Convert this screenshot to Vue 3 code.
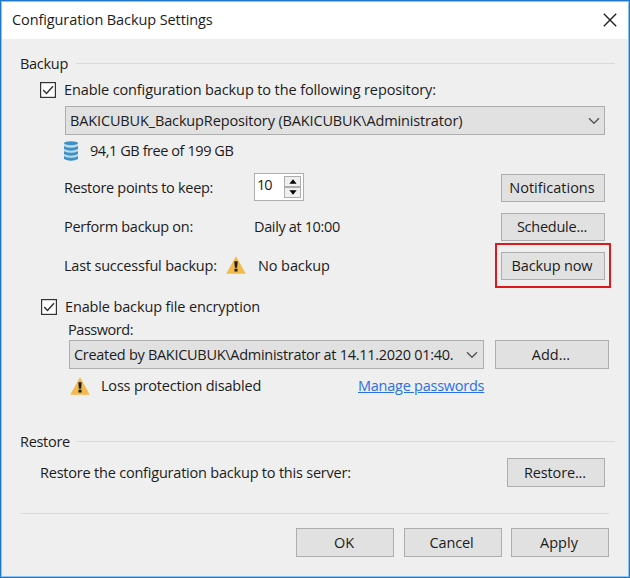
<script setup>
import { ref } from 'vue'

const backupEnabled = ref(true)
const encryptionEnabled = ref(true)
const keep = ref(10)
</script>

<template>
  <div class="window">
    <header class="titlebar">
      <span class="t s-title">Configuration Backup Settings</span>
      <svg class="close" width="14" height="14" viewBox="0 0 14 14"><path d="M0.8 0.8L13.2 13.2M13.2 0.8L0.8 13.2" /></svg>
    </header>

    <section class="backup">
      <div class="heading"><span class="t s-backup">Backup</span><i class="rule"></i></div>

      <div class="check-row first" @click="backupEnabled = !backupEnabled">
        <svg class="box" width="16" height="16" viewBox="0 0 16 16"><rect x=".6" y=".6" width="14.8" height="14.8" /><path v-if="backupEnabled" d="M3.2 8L6.5 11.4L13 4.2" /></svg>
        <span class="t s-enable">Enable configuration backup to the following repository:</span>
      </div>

      <div class="combo repo">
        <span class="t s-repo">BAKICUBUK_BackupRepository (BAKICUBUK\Administrator)</span>
        <svg class="chev" width="12" height="8" viewBox="0 0 12 8"><path d="M1 1.2L6 6.2L11 1.2" /></svg>
      </div>

      <div class="space-row">
        <svg class="db" width="14" height="20" viewBox="0 0 14 20">
          <path class="body" d="M0 2.2H14V18Q7 21.4 0 18Z" />
          <ellipse cx="7" cy="2.2" rx="7" ry="2" />
          <path class="band" d="M0 5.2Q7 8.2 14 5.2V8.1Q7 11.2 0 8.1ZM0 10.2Q7 13.2 14 10.2V13.1Q7 16.2 0 13.1ZM0 15.2Q7 18.2 14 15.2V18Q7 21.4 0 18Z" />
        </svg>
        <span class="t s-free">94,1 GB free of 199 GB</span>
      </div>

      <div class="field">
        <span class="t label s-keep">Restore points to keep:</span>
        <div class="spinner">
          <span class="t num">{{ keep }}</span>
          <div class="arrows">
            <button @click="keep++"><svg width="8" height="5" viewBox="0 0 8 5"><path d="M4 .3L7.6 4.7H.4Z" /></svg></button>
            <button @click="keep--"><svg width="8" height="5" viewBox="0 0 8 5"><path d="M4 4.7L7.6 .3H.4Z" /></svg></button>
          </div>
        </div>
        <button class="btn side-btn"><span class="t">Notifications</span></button>
      </div>

      <div class="field">
        <span class="t label s-perform">Perform backup on:</span>
        <span class="t s-daily">Daily at 10:00</span>
        <button class="btn side-btn"><span class="t s-sched">Schedule...</span></button>
      </div>

      <div class="field">
        <span class="t label short s-last">Last successful backup:</span>
        <svg class="warn" width="20" height="18" viewBox="0 0 20 18"><path d="M10 0.2L19.8 17.8H.2Z" /><path class="mark" d="M8.3 5.2H11.7L11.1 11.8H8.9ZM8.5 12.8H11.5V15.6H8.5Z" /></svg>
        <span class="t s-none">No backup</span>
        <button class="btn side-btn highlighted"><span class="t s-now">Backup now</span></button>
      </div>

      <div class="check-row second" @click="encryptionEnabled = !encryptionEnabled">
        <svg class="box" width="16" height="16" viewBox="0 0 16 16"><rect x=".6" y=".6" width="14.8" height="14.8" /><path v-if="encryptionEnabled" d="M3.2 8L6.5 11.4L13 4.2" /></svg>
        <span class="t s-encrypt">Enable backup file encryption</span>
      </div>

      <div class="password-label"><span class="t s-pass">Password:</span></div>

      <div class="password-row">
        <div class="combo password">
          <span class="t s-created">Created by BAKICUBUK\Administrator at 14.11.2020 01:40.</span>
          <svg class="chev" width="12" height="8" viewBox="0 0 12 8"><path d="M1 1.2L6 6.2L11 1.2" /></svg>
        </div>
        <button class="btn add"><span class="t">Add...</span></button>
      </div>

      <div class="loss-row">
        <svg class="warn" width="20" height="18" viewBox="0 0 20 18"><path d="M10 0.2L19.8 17.8H.2Z" /><path class="mark" d="M8.3 5.2H11.7L11.1 11.8H8.9ZM8.5 12.8H11.5V15.6H8.5Z" /></svg>
        <span class="t s-loss">Loss protection disabled</span>
        <a class="t s-manage">Manage passwords</a>
      </div>
    </section>

    <section class="restore">
      <div class="heading"><span class="t s-restore">Restore</span><i class="rule"></i></div>
      <div class="restore-row">
        <span class="t s-server">Restore the configuration backup to this server:</span>
        <button class="btn"><span class="t s-restbtn">Restore...</span></button>
      </div>
    </section>

    <footer class="footer">
      <button class="btn"><span class="t">OK</span></button>
      <button class="btn"><span class="t s-cancel">Cancel</span></button>
      <button class="btn"><span class="t">Apply</span></button>
    </footer>
  </div>
</template>

<style>
body { margin: 0; overflow: hidden; }
</style>

<style scoped>
* { box-sizing: border-box; }
.window {
  width: 630px;
  height: 578px;
  border: 1px solid #1f78cc;
  box-shadow: inset 0 0 0 1px #8cc3ef;
  background: #efefef;
  display: flex;
  flex-direction: column;
  font-family: "Open Sans", "Noto Sans", sans-serif;
  font-size: 14.5px;
  color: #1c1c1c;
}
.t { white-space: nowrap; line-height: 20px; display: block; }
.s-title { letter-spacing: -.1px; }
.s-backup, .s-restore { letter-spacing: -.3px; }
.s-enable { letter-spacing: -.115px; }
.s-repo { letter-spacing: -.14px; }
.s-free { letter-spacing: -.43px; }
.s-keep { letter-spacing: -.3px; }
.s-perform { letter-spacing: -.28px; }
.s-daily { letter-spacing: -.36px; }
.s-last { letter-spacing: -.2px; }
.s-none { letter-spacing: -.1px; }
.s-encrypt { letter-spacing: -.14px; }
.s-pass { letter-spacing: -.45px; }
.s-created { letter-spacing: -.29px; }
.s-server { letter-spacing: -.21px; }
.s-sched { letter-spacing: -.25px; }
.s-now, .s-restbtn, .s-cancel { letter-spacing: -.15px; }
.titlebar {
  height: 37px;
  margin: 1px 1px 0;
  padding: 0 11px 2px 10px;
  background: #fff;
  display: flex;
  align-items: center;
  justify-content: space-between;
}
.close { stroke: #222; stroke-width: 1.4; fill: none; }
.heading {
  height: 25px;
  display: flex;
  align-items: center;
  padding: 0 14px 0 19px;
}
.heading .t { width: 56px; }
.rule { flex: 1; height: 1px; background: #d9d9d9; }
.backup { padding-top: 12px; }
.check-row { display: flex; align-items: center; gap: 8px; }
.check-row.first { height: 27px; padding-left: 39px; }
.check-row.second { height: 26px; padding-left: 40px; margin-top: 9px; }
.box { fill: none; stroke: #333; stroke-width: 1.2; }
.box rect { fill: #fff; }
.box path { stroke-width: 1.5; }
.combo {
  height: 29px;
  border: 1px solid #adadad;
  background: #e1e1e1;
  display: flex;
  align-items: center;
  justify-content: space-between;
  padding: 0 4px;
}
.combo.repo { margin: 3px 24px 0 64px; }
.chev { fill: none; stroke: #555; stroke-width: 1.4; }
.space-row { height: 33px; display: flex; align-items: center; padding: 0 0 2px 63px; gap: 12px; }
.db { fill: #3f90c4; }
.db .body { fill: #bcdcee; }
.field { height: 39px; display: flex; align-items: center; padding: 1px 24px 0 63px; }
.label { width: 190px; }
.label.short { width: 162px; }
.warn { fill: #f2b94b; margin-right: 12px; flex: none; }
.field .warn { margin-top: -2px; }
.loss-row .warn { margin: -1px 11px 0 0; }
.warn .mark { fill: #1b1b1b; }
.spinner {
  width: 50px;
  height: 28px;
  margin-top: -2px;
  border: 1px solid #adadad;
  background: #fff;
  display: flex;
  justify-content: space-between;
  padding: 2px;
}
.num { letter-spacing: -1px; margin-top: -1px; }
.arrows { display: flex; flex-direction: column; width: 17px; }
.arrows button {
  flex: 1;
  padding: 0;
  border: 1px solid #adadad;
  background: #efefef;
  display: flex;
  align-items: center;
  justify-content: center;
}
.btn {
  height: 29px;
  width: 98px;
  padding: 0 2px 0 0;
  border: 1px solid #adadad;
  background: #e1e1e1;
  color: inherit;
  font: inherit;
  display: flex;
  align-items: center;
  justify-content: center;
}
.side-btn { width: 104px; height: 28px; margin-left: auto; }
.highlighted { position: relative; }
.highlighted::after {
  content: "";
  position: absolute;
  inset: -10px -7px -9px -7px;
  border: 2px solid #dc1a1c;
}
.password-label { height: 20px; padding-left: 67px; display: flex; align-items: center; }
.password-row { display: flex; gap: 11px; padding-left: 68px; }
.password { width: 415px; padding-right: 5px; }
.add { width: 114px; }
.loss-row { height: 35px; display: flex; align-items: center; padding: 0 0 1px 69px; }
.s-loss { width: 257px; letter-spacing: -.2px; }
.s-manage { color: #2a6fe8; text-decoration: underline; letter-spacing: -.25px; }
.restore { padding-top: 25px; }
.restore-row {
  height: 37px;
  display: flex;
  align-items: center;
  justify-content: space-between;
  padding: 0 24px 0 39px;
}
.footer {
  margin: 22px 20px 0 19px;
  padding-top: 14px;
  border-top: 1px solid #d9d9d9;
  display: flex;
  justify-content: flex-end;
  gap: 9.5px;
}
</style>
